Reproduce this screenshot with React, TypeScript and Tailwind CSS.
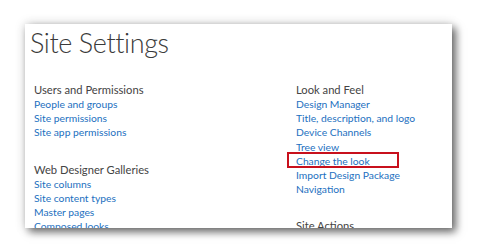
const usersLinks = ["People and groups", "Site permissions", "Site app permissions"];
const galleryLinks = ["Site columns", "Site content types", "Master pages", "Composed looks"];
const lookLinks = [
  "Design Manager",
  "Title, description, and logo",
  "Device Channels",
  "Tree view",
  "Change the look",
  "Import Design Package",
  "Navigation",
];

function Section({ title, links, highlight }: { title: string; links: string[]; highlight?: string }) {
  return (
    <div className="flex flex-col">
      <h2 className="text-[11.2px] leading-[14px] text-[#444444]">{title}</h2>
      <ul className="flex flex-col">
        {links.map((l) => (
          <li key={l} className="relative text-[10.3px] leading-[14.2px] text-[#2370c0]">
            {l === highlight && (
              <span className="absolute left-[-9px] top-[-2px] h-[16px] w-[112px] border-2 border-[#c8101c]" />
            )}
            {l}
          </li>
        ))}
      </ul>
    </div>
  );
}

export default function App() {
  return (
    <div className="h-[249px] w-[484px] overflow-hidden bg-white pl-[25px] pt-[24px] font-['Lato',sans-serif]">
      <div className="h-[204px] w-[427px] overflow-hidden bg-white shadow-[4px_4px_8px_rgba(0,0,0,0.55),0_0_10px_rgba(0,0,0,0.18)]">
        <h1 className="ml-[5px] mt-0 text-[27px] font-light leading-[38px] tracking-[-0.4px] text-[#3a3a3a]">Site Settings</h1>
        <div className="mt-[21px] grid grid-cols-[262px_1fr] pl-[9px]">
          <div className="flex flex-col gap-[23px]">
            <Section title="Users and Permissions" links={usersLinks} />
            <Section title="Web Designer Galleries" links={galleryLinks} />
          </div>
          <div className="flex flex-col gap-[23px]">
            <Section title="Look and Feel" links={lookLinks} highlight="Change the look" />
            <Section title="Site Actions" links={[]} />
          </div>
        </div>
      </div>
    </div>
  );
}
